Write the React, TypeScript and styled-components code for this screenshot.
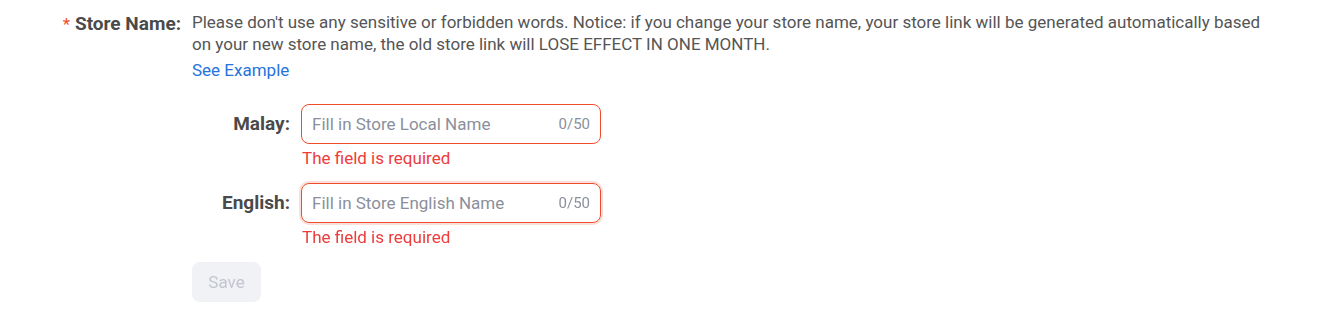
import React from "react";
import styled, { createGlobalStyle } from "styled-components";

const Global = createGlobalStyle`
  html, body { margin: 0; padding: 0; background: #fff; }
  body { font-family: Roboto, "Noto Sans", "Liberation Sans", sans-serif; }
  * { box-sizing: border-box; }
`;

const Page = styled.div`
  padding-top: 11px;
  width: 1330px;
`;

const FieldRow = styled.div`
  display: flex;
  align-items: flex-start;
  gap: 11px;
`;

const MainLabel = styled.div`
  width: 181px;
  flex-shrink: 0;
  text-align: right;
  font-size: 19px;
  font-weight: 700;
  line-height: 26px;
  color: #4a4a4a;
  white-space: nowrap;
`;

const Star = styled.span`
  color: #ee4d2d;
  font-weight: 400;
  font-size: 17px;
  margin-right: 5px;
`;

const Content = styled.div`
  flex: 1;
  padding-right: 58px;
`;

const Hint = styled.div`
  font-size: 17px;
  line-height: 22px;
  color: #555;
`;

const Link = styled.a`
  display: inline-block;
  margin-top: 4px;
  font-size: 17px;
  line-height: 22px;
  color: #2673dd;
  text-decoration: none;
  cursor: pointer;
`;

const SubRow = styled.div<{ $first?: boolean }>`
  display: flex;
  align-items: flex-start;
  gap: 11px;
  margin-top: ${(p) => (p.$first ? "23px" : "14px")};
`;

const SubLabel = styled.div`
  width: 98px;
  flex-shrink: 0;
  text-align: right;
  font-size: 19px;
  font-weight: 700;
  line-height: 40px;
  color: #4a4a4a;
  white-space: nowrap;
`;

const InputCol = styled.div`
  display: flex;
  flex-direction: column;
`;

const InputBox = styled.div<{ $focus?: boolean }>`
  width: 300px;
  height: 40px;
  border: 1px solid #ee4d2d;
  border-radius: 8px;
  display: flex;
  align-items: center;
  padding: 0 10px 0 10px;
  box-shadow: ${(p) => (p.$focus ? "0 0 0 2px rgba(238, 77, 45, 0.18)" : "none")};
`;

const Field = styled.input`
  flex: 1;
  min-width: 0;
  border: none;
  outline: none;
  background: transparent;
  font-family: inherit;
  font-size: 17px;
  color: #333;
  padding: 0;
  caret-color: #333;
  &::placeholder { color: #8a8f9b; }
`;

const Counter = styled.span`
  font-size: 15px;
  color: #8a8f9b;
  margin-left: 8px;
`;

const ErrorText = styled.div`
  font-size: 17px;
  line-height: 22px;
  color: #ee3b3b;
  margin-top: 3px;
  padding-left: 1px;
`;

const SaveButton = styled.button`
  margin-top: 14px;
  width: 69px;
  height: 40px;
  border: none;
  border-radius: 8px;
  background: #f1f2f6;
  color: #c3c6ce;
  font-family: inherit;
  font-size: 17px;
  cursor: not-allowed;
`;

export default function App() {
  return (
    <>
      <Global />
      <Page>
        <FieldRow>
          <MainLabel>
            <Star>*</Star>Store Name:
          </MainLabel>
          <Content>
            <Hint>
              Please don't use any sensitive or forbidden words. Notice: if you change your store name, your store link will be generated automatically based on your new store name, the old store link will LOSE EFFECT IN ONE MONTH.
            </Hint>
            <Link>See Example</Link>
            <SubRow $first>
              <SubLabel>Malay:</SubLabel>
              <InputCol>
                <InputBox>
                  <Field placeholder="Fill in Store Local Name" />
                  <Counter>0/50</Counter>
                </InputBox>
                <ErrorText>The field is required</ErrorText>
              </InputCol>
            </SubRow>
            <SubRow>
              <SubLabel>English:</SubLabel>
              <InputCol>
                <InputBox $focus>
                  <Field placeholder="Fill in Store English Name" autoFocus />
                  <Counter>0/50</Counter>
                </InputBox>
                <ErrorText>The field is required</ErrorText>
              </InputCol>
            </SubRow>
            <SaveButton disabled>Save</SaveButton>
          </Content>
        </FieldRow>
      </Page>
    </>
  );
}
